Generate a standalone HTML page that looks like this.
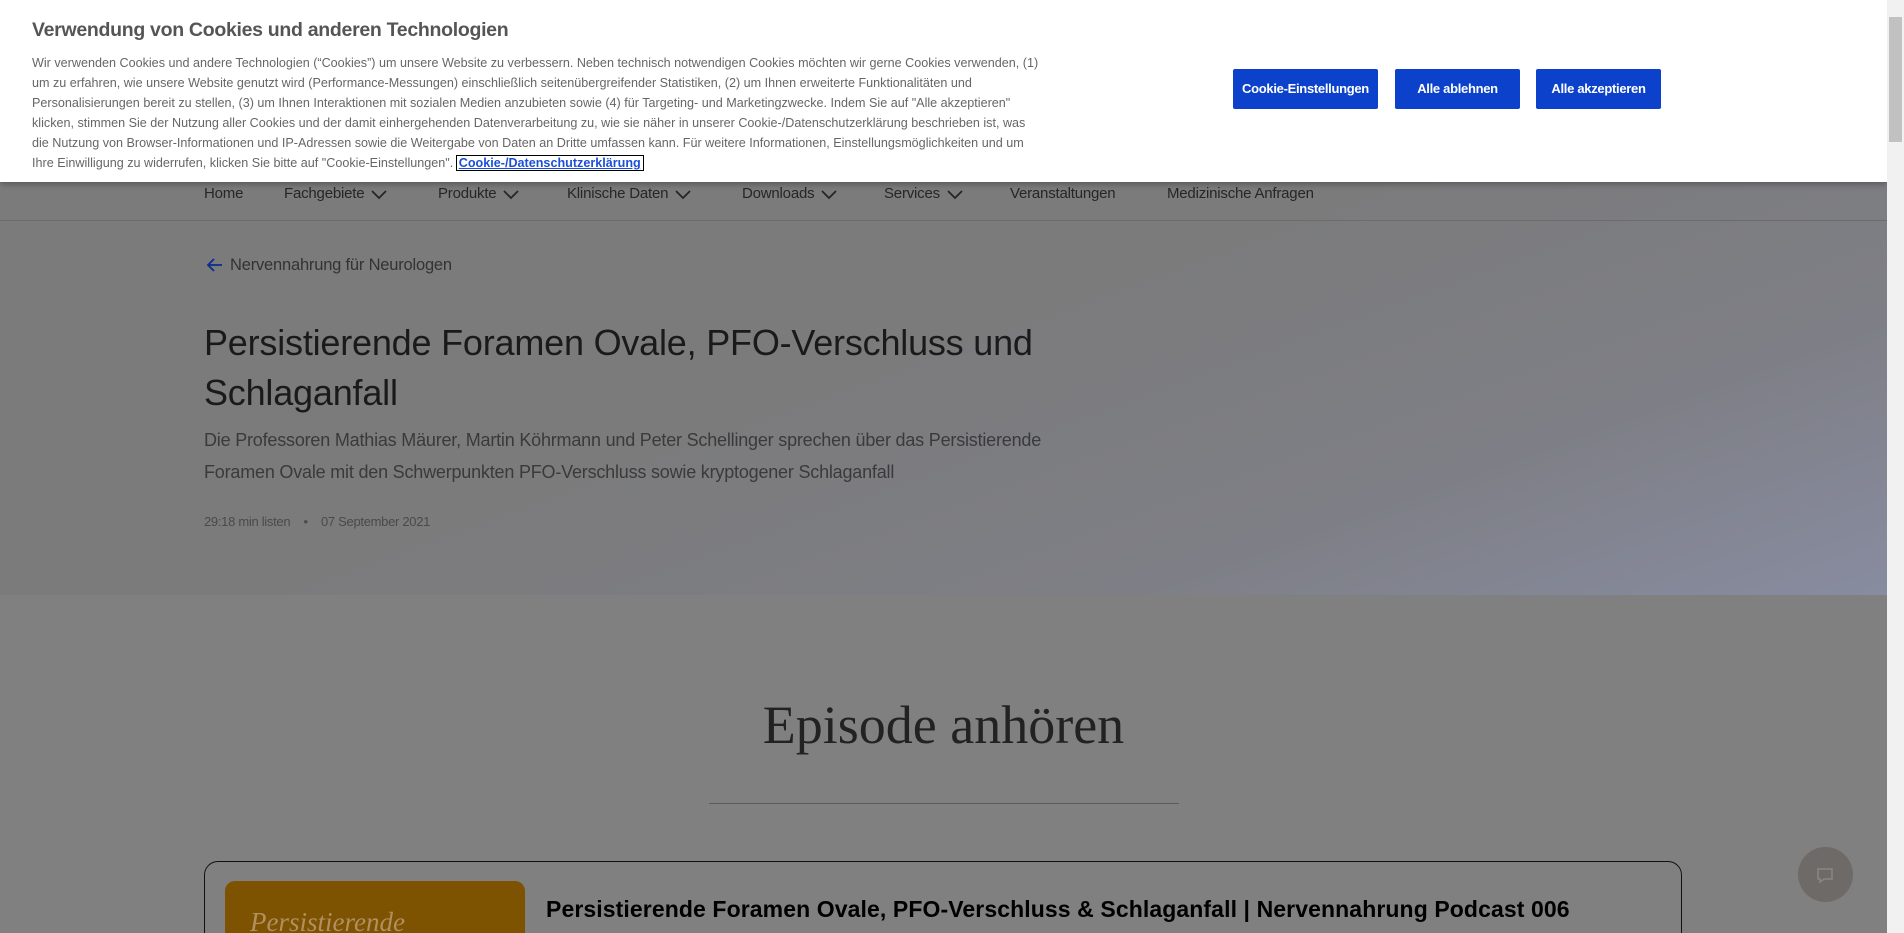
<!DOCTYPE html>
<html><head><meta charset="utf-8">
<style>
*{margin:0;padding:0;box-sizing:border-box}
html,body{width:1904px;height:933px;overflow:hidden;background:#808080;font-family:"Liberation Sans",sans-serif}
.page{position:absolute;left:0;top:0;width:1887px;height:933px;background:#808080;overflow:hidden}
.hero{position:absolute;left:0;top:182px;width:1887px;height:413px;background:linear-gradient(160deg,#7b7b7b 0%,#7b7b7c 45%,#7e7f86 75%,#888ca0 100%)}
.navline{position:absolute;left:0;top:220px;width:1887px;height:1px;background:#6c6c6c}
.nav{position:absolute;top:185px;height:22px;font-size:15px;color:#262626;white-space:nowrap;letter-spacing:-0.2px}
.nav svg{vertical-align:middle;margin-left:6px}
.back{position:absolute;left:206px;top:256px;font-size:16.5px;color:#333;letter-spacing:-0.2px}
.back svg{vertical-align:-3px;margin-right:6px}
h1{position:absolute;left:204px;top:318px;width:900px;font-size:36px;line-height:50px;font-weight:normal;color:#1a1a1a;letter-spacing:-0.2px}
.sub{position:absolute;left:204px;top:424px;width:900px;font-size:18px;line-height:32px;color:#3a3a3a;letter-spacing:-0.2px}
.meta{position:absolute;left:204px;top:514px;font-size:13px;color:#4a4a4a;letter-spacing:-0.3px}
.ep{position:absolute;left:0;width:1887px;top:694px;text-align:center;font-family:"Liberation Serif",serif;font-size:54px;color:#222}
.epline{position:absolute;left:709px;top:803px;width:470px;height:1px;background:#5a5a5a}
.card{position:absolute;left:204px;top:861px;width:1478px;height:90px;border:1px solid #111;border-radius:14px}
.img{position:absolute;left:225px;top:881px;width:300px;height:70px;border-radius:10px 10px 0 0;background:#7d5200;overflow:hidden}
.img span{position:absolute;left:25px;top:26px;font-family:"Liberation Serif",serif;font-style:italic;font-size:27px;color:#b09060}
.ctitle{position:absolute;left:546px;top:896px;font-size:23px;font-weight:bold;color:#000;letter-spacing:0.1px}
.chat{position:absolute;left:1798px;top:847px;width:55px;height:55px;border-radius:50%;background:#6e6a68}
.banner{position:absolute;left:0;top:0;width:1887px;height:182px;background:#fff;box-shadow:0 2px 6px rgba(0,0,0,.3)}
.btitle{position:absolute;left:32px;top:19px;font-size:19.5px;font-weight:bold;color:#555;letter-spacing:-0.3px}
.btext{position:absolute;left:32px;top:53px;font-size:12.6px;line-height:20px;color:#666;white-space:nowrap}
.btext a{color:#1a4fd8;font-weight:bold;text-decoration:underline;outline:1px solid #000;padding:0 2px}
.btn{position:absolute;top:69px;height:40px;background:#0c41cc;color:#fff;font-weight:bold;font-size:13px;border-radius:2px;text-align:center;line-height:40px;letter-spacing:-0.3px}
.sb{position:absolute;left:1887px;top:0;width:17px;height:933px;background:#f1f1f1}
.sb i{position:absolute;left:2px;top:17px;width:13px;height:125px;background:#c1c1c1}
</style></head><body>
<div class="page">
<div class="hero"></div>
<div class="navline"></div>
<div class="nav" style="left:204px">Home</div>
<div class="nav" style="left:284px">Fachgebiete<svg width="18" height="12" viewBox="0 0 18 12"><path d="M2 3l7 7 7-7" fill="none" stroke="#262626" stroke-width="1.8"/></svg></div>
<div class="nav" style="left:438px">Produkte<svg width="18" height="12" viewBox="0 0 18 12"><path d="M2 3l7 7 7-7" fill="none" stroke="#262626" stroke-width="1.8"/></svg></div>
<div class="nav" style="left:567px">Klinische Daten<svg width="18" height="12" viewBox="0 0 18 12"><path d="M2 3l7 7 7-7" fill="none" stroke="#262626" stroke-width="1.8"/></svg></div>
<div class="nav" style="left:742px">Downloads<svg width="18" height="12" viewBox="0 0 18 12"><path d="M2 3l7 7 7-7" fill="none" stroke="#262626" stroke-width="1.8"/></svg></div>
<div class="nav" style="left:884px">Services<svg width="18" height="12" viewBox="0 0 18 12"><path d="M2 3l7 7 7-7" fill="none" stroke="#262626" stroke-width="1.8"/></svg></div>
<div class="nav" style="left:1010px">Veranstaltungen</div>
<div class="nav" style="left:1167px">Medizinische Anfragen</div>
<div class="back"><svg width="18" height="16" viewBox="0 0 18 16"><path d="M16 8H3M8 2L2 8l6 6" fill="none" stroke="#0a2e8a" stroke-width="1.8"/></svg>Nervennahrung für Neurologen</div>
<h1>Persistierende Foramen Ovale, PFO-Verschluss und Schlaganfall</h1>
<div class="sub">Die Professoren Mathias Mäurer, Martin Köhrmann und Peter Schellinger sprechen über das Persistierende Foramen Ovale mit den Schwerpunkten PFO-Verschluss sowie kryptogener Schlaganfall</div>
<div class="meta">29:18 min listen &nbsp;&nbsp;&nbsp;•&nbsp;&nbsp;&nbsp; 07 September 2021</div>
<div class="ep">Episode anhören</div>
<div class="epline"></div>
<div class="card"></div>
<div class="img"><span>Persistierende</span></div>
<div class="ctitle">Persistierende Foramen Ovale, PFO-Verschluss &amp; Schlaganfall | Nervennahrung Podcast 006</div>
<div class="chat"><svg width="55" height="55" viewBox="0 0 55 55"><path d="M20 22h14v10h-8l-4 3v-3h-2z" fill="none" stroke="#8a8684" stroke-width="1.5"/></svg></div>
</div>
<div class="banner">
<div class="btitle">Verwendung von Cookies und anderen Technologien</div>
<div class="btext">Wir verwenden Cookies und andere Technologien (“Cookies”) um unsere Website zu verbessern. Neben technisch notwendigen Cookies möchten wir gerne Cookies verwenden, (1)<br>um zu erfahren, wie unsere Website genutzt wird (Performance-Messungen) einschließlich seitenübergreifender Statistiken, (2) um Ihnen erweiterte Funktionalitäten und<br>Personalisierungen bereit zu stellen, (3) um Ihnen Interaktionen mit sozialen Medien anzubieten sowie (4) für Targeting- und Marketingzwecke. Indem Sie auf "Alle akzeptieren"<br>klicken, stimmen Sie der Nutzung aller Cookies und der damit einhergehenden Datenverarbeitung zu, wie sie näher in unserer Cookie-/Datenschutzerklärung beschrieben ist, was<br>die Nutzung von Browser-Informationen und IP-Adressen sowie die Weitergabe von Daten an Dritte umfassen kann. Für weitere Informationen, Einstellungsmöglichkeiten und um<br>Ihre Einwilligung zu widerrufen, klicken Sie bitte auf "Cookie-Einstellungen". <a>Cookie-/Datenschutzerklärung</a></div>
<div class="btn" style="left:1233px;width:145px">Cookie-Einstellungen</div>
<div class="btn" style="left:1395px;width:125px">Alle ablehnen</div>
<div class="btn" style="left:1536px;width:125px">Alle akzeptieren</div>
</div>
<div class="sb"><i></i></div>
</body></html>
